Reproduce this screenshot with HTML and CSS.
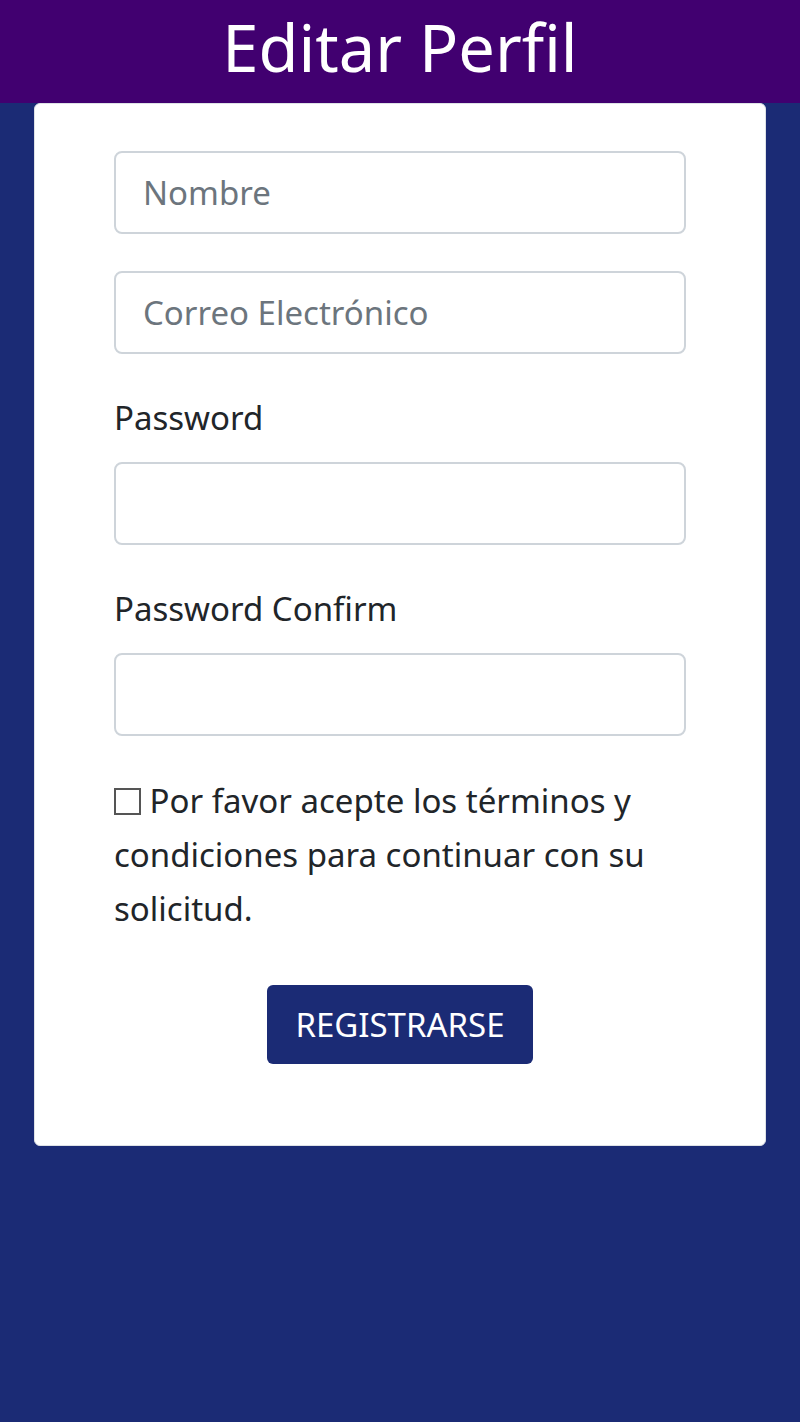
FILE: index.html
```html
<!DOCTYPE html>
<html lang="es">
<head>
<meta charset="utf-8">
<title>Editar Perfil</title>
<link rel="stylesheet" href="styles.css">
</head>
<body>
<header class="topbar"><h1 class="title">Editar Perfil</h1></header>
<main class="card">
  <form class="form">
    <input class="field" type="text" placeholder="Nombre">
    <input class="field field-gap" type="email" placeholder="Correo Electrónico">
    <label class="label">Password</label>
    <input class="field" type="password">
    <label class="label">Password Confirm</label>
    <input class="field" type="password">
    <p class="terms"><span class="box"></span> Por favor acepte los términos y condiciones para continuar con su solicitud.</p>
    <div class="actions"><button class="btn" type="button">REGISTRARSE</button></div>
  </form>
</main>
</body>
</html>
```
FILE: styles.css
```css
html, body {
  margin: 0;
  padding: 0;
}
body {
  background: #1b2b75;
  min-height: 1422px;
  font-family: "Noto Sans", "Open Sans", sans-serif;
  color: #212529;
}
.topbar {
  background: #410070;
  height: 103px;
  text-align: center;
}
.title {
  margin: 0;
  font-weight: 400;
  font-size: 65px;
  line-height: 95px;
  color: #fff;
}
.card {
  margin: 0 34px;
  background: #fff;
  border: 1px solid #dee2e6;
  border-radius: 6px;
  padding: 47px 79px 81px;
}
.form {
  display: flex;
  flex-direction: column;
}
.field {
  box-sizing: border-box;
  height: 83px;
  width: 100%;
  border: 2px solid #ced4da;
  border-radius: 8px;
  padding: 0 27px;
  font-family: inherit;
  font-size: 33px;
  color: #495057;
  background: #fff;
  outline: none;
}
.field::placeholder {
  color: #6c757d;
}
.field-gap {
  margin-top: 37px;
}
.label {
  display: block;
  margin-top: 40px;
  margin-bottom: 20px;
  font-size: 33px;
  line-height: 48px;
}
.terms {
  margin: 38px 0 0;
  font-size: 33px;
  line-height: 54px;
}
.box {
  display: inline-block;
  box-sizing: border-box;
  width: 27px;
  height: 27px;
  border: 2px solid #555;
  vertical-align: -2px;
}
.actions {
  display: flex;
  justify-content: center;
  margin-top: 49px;
}
.btn {
  width: 266px;
  height: 79px;
  background: #1b2b75;
  color: #fff;
  border: none;
  border-radius: 6px;
  font-family: inherit;
  font-size: 33px;
}
```
